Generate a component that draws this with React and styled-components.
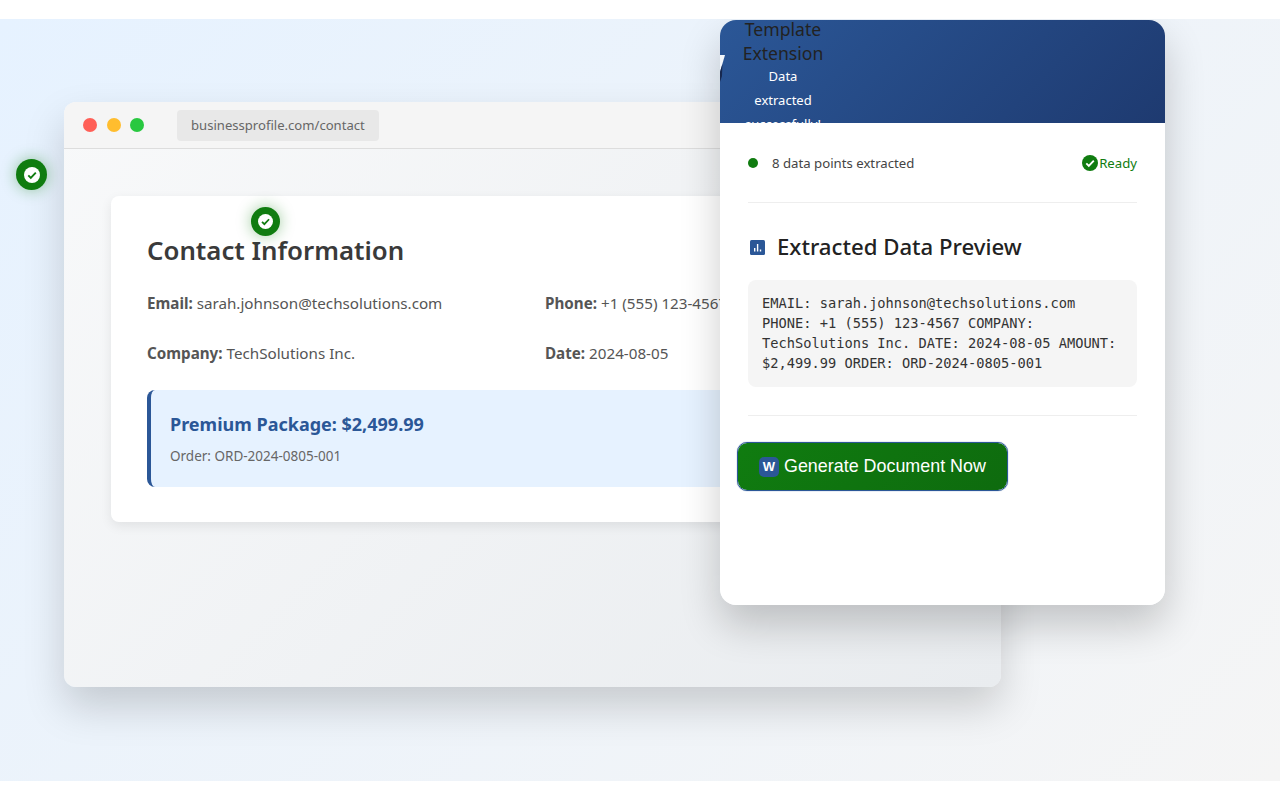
import React from "react";
import styled, { createGlobalStyle } from "styled-components";

const Global = createGlobalStyle`
  html, body { margin: 0; padding: 0; background: #fff; }
  * { box-sizing: border-box; }
  body { font-family: "Noto Sans", "Open Sans", sans-serif; }
`;

const Page = styled.div`
  padding: 19px 0;
  height: 800px;
`;

const Stage = styled.section`
  position: relative;
  height: 762px;
  overflow: hidden;
  background: linear-gradient(135deg, #e6f2ff 0%, #f5f5f5 100%);
`;

const BrowserWindow = styled.div`
  position: absolute;
  left: 64px;
  top: 83px;
  width: 937px;
  height: 585px;
  border-radius: 12px;
  overflow: hidden;
  background: linear-gradient(135deg, #f8f9fa 0%, #e9ecef 100%);
`;

const BrowserShadow = styled.div`
  position: absolute;
  left: 64px;
  top: 83px;
  width: 937px;
  height: 585px;
  border-radius: 12px;
  box-shadow: 0 20px 40px rgba(0, 0, 0, 0.17);
`;

const BrowserBar = styled.header`
  height: 47px;
  display: flex;
  align-items: center;
  padding: 0 19px;
  gap: 9.5px;
  background: #f5f5f5;
  border-bottom: 1px solid #ddd;
`;

const Dot = styled.span`
  width: 14px;
  height: 14px;
  border-radius: 50%;
  background: ${(p) => p.$color};
`;

const Url = styled.div`
  margin-left: 23.5px;
  height: 31px;
  padding: 0 14px;
  display: flex;
  align-items: center;
  border-radius: 4px;
  background: #e8e8e8;
  font-size: 13.1px;
  color: #666;
`;

const PageBody = styled.div`
  padding: 47px;
`;

const Card = styled.article`
  height: 326px;
  padding: 35px 36px;
  border-radius: 8px;
  background: #fff;
  box-shadow: 0 4px 12px rgba(0, 0, 0, 0.08);
`;

const CardTitle = styled.h2`
  margin: 0 0 22px;
  font-size: 25.8px;
  line-height: 38px;
  font-weight: 600;
  color: #3a3a3a;
`;

const FieldGrid = styled.div`
  display: grid;
  grid-template-columns: 374px 374px;
  column-gap: 24px;
  row-gap: 26px;
`;

const Field = styled.p`
  margin: 0;
  font-size: 15.2px;
  line-height: 24px;
  color: #555;
  white-space: nowrap;
  b { font-weight: 700; }
`;

const Promo = styled.div`
  margin-top: 25px;
  height: 97px;
  padding: 20px 19px;
  border-left: 4px solid #2b5797;
  border-radius: 8px;
  background: #e6f2ff;
`;

const PromoTitle = styled.div`
  font-size: 18px;
  line-height: 28px;
  font-weight: 700;
  color: #2b5797;
`;

const PromoOrder = styled.div`
  margin-top: 9px;
  font-size: 13.5px;
  line-height: 19px;
  color: #666;
`;

const Panel = styled.aside`
  position: absolute;
  left: 720px;
  top: 1px;
  width: 445px;
  height: 585px;
  border-radius: 16px;
  overflow: hidden;
  background: #fff;
`;

const PanelShadow = styled.div`
  position: absolute;
  left: 720px;
  top: 1px;
  width: 445px;
  height: 585px;
  border-radius: 16px;
  box-shadow: 0 20px 40px rgba(0, 0, 0, 0.2);
`;

const PanelHead = styled.header`
  position: relative;
  height: 103px;
  overflow: hidden;
  display: flex;
  background: linear-gradient(135deg, #2b5797 0%, #1e3a70 100%);
`;

const PanelHeadText = styled.div`
  width: 126px;
  margin-top: -3px;
  text-align: center;
`;

const ExtName = styled.div`
  font-size: 17.6px;
  line-height: 24px;
  font-weight: 400;
  color: #222;
`;

const ExtSub = styled.div`
  margin-top: -1px;
  padding: 0 20px;
  font-size: 13px;
  line-height: 24px;
  color: #fff;
`;

const Sliver = styled.svg`
  position: absolute;
  left: 0;
  top: 34px;
`;

const PanelBody = styled.div`
  padding: 28px;
`;

const StatusRow = styled.div`
  display: flex;
  align-items: center;
  height: 24px;
  font-size: 13.2px;
  color: #444;
`;

const GreenDot = styled.span`
  width: 10px;
  height: 10px;
  margin-right: 14px;
  border-radius: 50%;
  background: #107c10;
`;

const Ready = styled.span`
  margin-left: auto;
  display: flex;
  align-items: center;
  gap: 1px;
  color: #107c10;
`;

const Divider = styled.hr`
  margin: ${(p) => p.$margin};
  border: 0;
  border-top: 1px solid #eee;
`;

const PreviewTitle = styled.h3`
  margin: 0 0 18px;
  display: flex;
  align-items: center;
  gap: 12px;
  padding-left: 2px;
  font-size: 22.2px;
  line-height: 30px;
  font-weight: 500;
  color: #222;
`;

const Code = styled.pre`
  margin: 0;
  padding: 13px 14px;
  height: 107px;
  border-radius: 8px;
  background: #f5f5f5;
  font-family: "DejaVu Sans Mono", "Liberation Mono", monospace;
  font-size: 13.7px;
  line-height: 20px;
  color: #333;
  white-space: pre-wrap;
`;

const GenerateButton = styled.button`
  margin-left: -11px;
  width: 271px;
  height: 49px;
  display: flex;
  align-items: center;
  gap: 5px;
  padding: 0 21px;
  border: 1px solid #2b5797;
  border-radius: 10px;
  background: linear-gradient(135deg, #107c10 0%, #0e6b0e 100%) padding-box;
  box-shadow: 0 0 1px #2b5797;
  font-family: "Liberation Sans", Arial, sans-serif;
  font-size: 17.9px;
  color: #fff;
`;

const WordIcon = styled.span`
  width: 20px;
  height: 20px;
  display: flex;
  align-items: center;
  justify-content: center;
  border-radius: 5px;
  background: #2b5797;
  font-size: 13px;
  font-weight: 700;
  color: #fff;
`;

const CheckBadge = styled.div`
  position: absolute;
  left: ${(p) => p.$x}px;
  top: ${(p) => p.$y}px;
  width: ${(p) => p.$size}px;
  height: ${(p) => p.$size}px;
  display: flex;
  align-items: center;
  justify-content: center;
  border-radius: 50%;
  background: #107c10;
  box-shadow: 0 0 15px rgba(16, 124, 16, 0.4);
`;

const CircleCheck = ({ size, bg, fg }) => (
  <svg width={size} height={size} viewBox="0 0 16 16" aria-hidden="true">
    <circle cx="8" cy="8" r="8" fill={bg} />
    <path d="M4.3 8.3l2.5 2.5 5-5.2" fill="none" stroke={fg} strokeWidth="1.9" />
  </svg>
);

const ChartIcon = () => (
  <svg width="15" height="15" viewBox="0 0 15 15" aria-hidden="true">
    <rect width="15" height="15" rx="1.5" fill="#2b5797" />
    <path d="M4 8v3.4h1.4V8zM6.9 4v7.4h1.4V4zM9.8 9.4v2h1.4v-2z" fill="#fff" />
  </svg>
);

export default function App() {
  return (
    <Page>
      <Global />
      <Stage>
        <BrowserShadow />
        <BrowserWindow>
          <BrowserBar>
            <Dot $color="#ff5f57" />
            <Dot $color="#ffbd2e" />
            <Dot $color="#28c840" />
            <Url>businessprofile.com/contact</Url>
          </BrowserBar>
          <PageBody>
            <Card>
              <CardTitle>Contact Information</CardTitle>
              <FieldGrid>
                <Field><b>Email:</b> sarah.johnson@techsolutions.com</Field>
                <Field><b>Phone:</b> +1 (555) 123-4567</Field>
                <Field><b>Company:</b> TechSolutions Inc.</Field>
                <Field><b>Date:</b> 2024-08-05</Field>
              </FieldGrid>
              <Promo>
                <PromoTitle>Premium Package: $2,499.99</PromoTitle>
                <PromoOrder>Order: ORD-2024-0805-001</PromoOrder>
              </Promo>
            </Card>
          </PageBody>
        </BrowserWindow>

        <CheckBadge $x={16} $y={140} $size={31}>
          <CircleCheck size={16} bg="#fff" fg="#107c10" />
        </CheckBadge>
        <CheckBadge $x={251} $y={188} $size={29}>
          <CircleCheck size={15} bg="#fff" fg="#107c10" />
        </CheckBadge>

        <PanelShadow />
        <Panel>
          <PanelHead>
            <PanelHeadText>
              <ExtName>Template Extension</ExtName>
              <ExtSub>Data extracted successfully!</ExtSub>
            </PanelHeadText>
            <Sliver width="6" height="28" viewBox="0 0 6 28" aria-hidden="true">
              <path d="M0 1h5L0 18z" fill="#f4f7fb" />
              <path d="M0 18l2.4-8L2 22 0 28z" fill="#17284f" />
            </Sliver>
          </PanelHead>
          <PanelBody>
            <StatusRow>
              <GreenDot />
              8 data points extracted
              <Ready>
                <CircleCheck size={16} bg="#107c10" fg="#fff" />
                Ready
              </Ready>
            </StatusRow>
            <Divider $margin="27px 0 29px" />
            <PreviewTitle>
              <ChartIcon />
              Extracted Data Preview
            </PreviewTitle>
            <Code>EMAIL: sarah.johnson@techsolutions.com PHONE: +1 (555) 123-4567 COMPANY: TechSolutions Inc. DATE: 2024-08-05 AMOUNT: $2,499.99 ORDER: ORD-2024-0805-001</Code>
            <Divider $margin="28px 0 26px" />
            <GenerateButton type="button">
              <WordIcon>W</WordIcon>
              Generate Document Now
            </GenerateButton>
          </PanelBody>
        </Panel>
      </Stage>
    </Page>
  );
}
